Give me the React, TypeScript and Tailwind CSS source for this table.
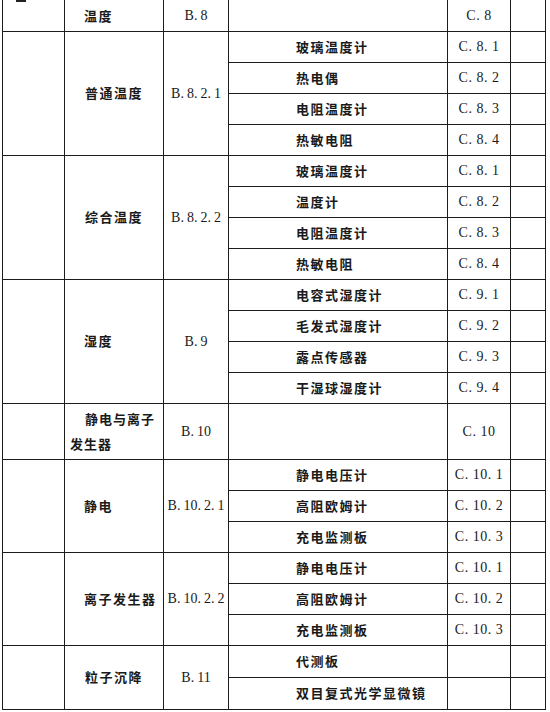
import React from "react"

type Item = { n: string; c: string }
type Group = { name: string; b: string; items: Item[]; tall?: boolean }

const groups: Group[] = [
  { name: "温度", b: "B. 8", items: [{ n: "", c: "C. 8" }] },
  {
    name: "普通温度",
    b: "B. 8. 2. 1",
    items: [
      { n: "玻璃温度计", c: "C. 8. 1" },
      { n: "热电偶", c: "C. 8. 2" },
      { n: "电阻温度计", c: "C. 8. 3" },
      { n: "热敏电阻", c: "C. 8. 4" },
    ],
  },
  {
    name: "综合温度",
    b: "B. 8. 2. 2",
    items: [
      { n: "玻璃温度计", c: "C. 8. 1" },
      { n: "温度计", c: "C. 8. 2" },
      { n: "电阻温度计", c: "C. 8. 3" },
      { n: "热敏电阻", c: "C. 8. 4" },
    ],
  },
  {
    name: "湿度",
    b: "B. 9",
    items: [
      { n: "电容式湿度计", c: "C. 9. 1" },
      { n: "毛发式湿度计", c: "C. 9. 2" },
      { n: "露点传感器", c: "C. 9. 3" },
      { n: "干湿球湿度计", c: "C. 9. 4" },
    ],
  },
  { name: "静电与离子发生器", b: "B. 10", items: [{ n: "", c: "C. 10" }], tall: true },
  {
    name: "静电",
    b: "B. 10. 2. 1",
    items: [
      { n: "静电电压计", c: "C. 10. 1" },
      { n: "高阻欧姆计", c: "C. 10. 2" },
      { n: "充电监测板", c: "C. 10. 3" },
    ],
  },
  {
    name: "离子发生器",
    b: "B. 10. 2. 2",
    items: [
      { n: "静电电压计", c: "C. 10. 1" },
      { n: "高阻欧姆计", c: "C. 10. 2" },
      { n: "充电监测板", c: "C. 10. 3" },
    ],
  },
  {
    name: "粒子沉降",
    b: "B. 11",
    items: [
      { n: "代测板", c: "" },
      { n: "双目复式光学显微镜", c: "" },
    ],
  },
]

const cell = "border-[1.5px] border-[#1c1c1c] p-0 align-middle"
const cjk = "[font-family:'Noto_Sans_CJK_SC',sans-serif] font-semibold text-[13px] tracking-[1.5px]"
const latinB = "[font-family:'Liberation_Serif',serif] text-[14px] [word-spacing:-0.5px]"
const latinC = "[font-family:'Liberation_Serif',serif] text-[14px] tracking-[0.5px]"

export default function App() {
  return (
    <div className="w-[550px] h-[712px] bg-white overflow-hidden text-[#1a1a1a]">
      <table className="ml-[2px] w-[543px] table-fixed border-collapse">
        <colgroup>
          <col className="w-[62px]" />
          <col className="w-[99px]" />
          <col className="w-[65px]" />
          <col className="w-[219px]" />
          <col className="w-[63px]" />
          <col className="w-[35px]" />
        </colgroup>
        <tbody>
          {groups.map((g, gi) =>
            g.items.map((it, ii) => {
              const top = gi === 0 ? " border-t-0" : ""
              const last = gi === groups.length - 1
              return (
                <tr key={`${gi}-${ii}`} className={g.tall ? "h-[56px]" : last ? "h-[32px]" : "h-[31px]"}>
                  {ii === 0 && (
                    <>
                      <td rowSpan={g.items.length} className={cell + top + " relative"}>
                        {gi === 0 && <span className="absolute left-[13px] top-0 h-[2px] w-[10px] bg-[#222]" />}
                      </td>
                      <td rowSpan={g.items.length} className={cell + top}>
                        {g.tall ? (
                          <div className={cjk + " pl-[5px] pr-0 indent-[15px] leading-[25px] tracking-[1px]"}>{g.name}</div>
                        ) : (
                          <div className={cjk + (g.name.length === 4 && gi !== 0 ? " text-center" : " pl-[19px]")}>
                            {g.name}
                          </div>
                        )}
                      </td>
                      <td rowSpan={g.items.length} className={cell + top}>
                        <div className={latinB + " text-center whitespace-nowrap"}>{g.b}</div>
                      </td>
                    </>
                  )}
                  <td className={cell + top}>
                    <div className={cjk + " pl-[67px]"}>{it.n}</div>
                  </td>
                  <td className={cell + top}>
                    <div className={latinC + " text-center whitespace-nowrap"}>{it.c}</div>
                  </td>
                  <td className={cell + top} />
                </tr>
              )
            })
          )}
        </tbody>
      </table>
    </div>
  )
}
